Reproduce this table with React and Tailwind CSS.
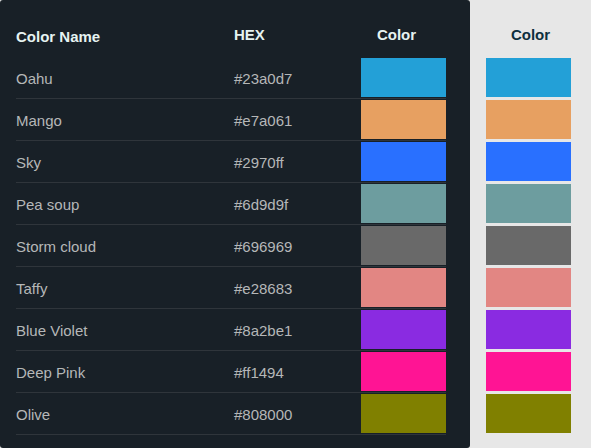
import React from "react";

const colors = [
  { name: "Oahu", hex: "#23a0d7" },
  { name: "Mango", hex: "#e7a061" },
  { name: "Sky", hex: "#2970ff" },
  { name: "Pea soup", hex: "#6d9d9f" },
  { name: "Storm cloud", hex: "#696969" },
  { name: "Taffy", hex: "#e28683" },
  { name: "Blue Violet", hex: "#8a2be1" },
  { name: "Deep Pink", hex: "#ff1494" },
  { name: "Olive", hex: "#808000" },
];

export default function App() {
  return (
    <div
      className="flex w-[591px] h-[448px] bg-[#e7e7e7] overflow-hidden"
      style={{ fontFamily: '"Liberation Sans", Arial, sans-serif' }}
    >
      {/* tabla oscura */}
      <div className="w-[470px] h-[448px] bg-[#182027] rounded-[3px] pl-4 shrink-0">
        <table className="w-[430px] border-collapse table-fixed text-[15px]">
          <colgroup>
            <col className="w-[218px]" />
            <col className="w-[113px]" />
            <col className="w-[99px]" />
          </colgroup>
          <thead>
            <tr className="h-[57px] text-[#e6f3f1] font-bold">
              <th className="text-left align-top pt-[26px] p-0">Color Name</th>
              <th className="text-left align-top pt-[24px] p-0">HEX</th>
              <th className="text-center align-top pt-[24px] p-0">Color</th>
            </tr>
          </thead>
          <tbody>
            {colors.map((c) => (
              <tr key={c.name} className="border-b border-[#2f353b] text-[#b5b7b8]">
                <td className="p-0 pt-[4px] align-middle">{c.name}</td>
                <td className="p-0 pt-[4px] align-middle">{c.hex}</td>
                <td className="p-0 pt-px pb-px pl-[14px]">
                  <div className="w-[85px] h-[39px]" style={{ backgroundColor: c.hex }}></div>
                </td>
              </tr>
            ))}
          </tbody>
        </table>
      </div>

      {/* columna clara */}
      <div className="pl-4 flex flex-col">
        <div className="w-[89px] h-[58px] pt-[24px] text-center text-[15px] font-bold text-[#0e2f3e]">
          Color
        </div>
        <div className="flex flex-col gap-[3px]">
          {colors.map((c) => (
            <div key={c.name} className="w-[85px] h-[39px]" style={{ backgroundColor: c.hex }}></div>
          ))}
        </div>
      </div>
    </div>
  );
}
